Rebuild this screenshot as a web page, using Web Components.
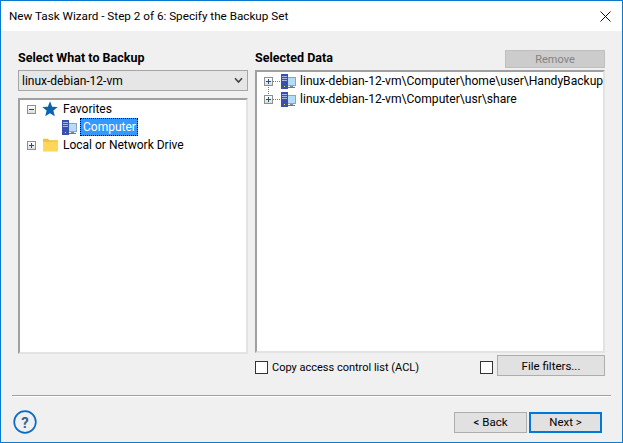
<!DOCTYPE html>
<html>
<head>
<meta charset="utf-8">
<title>New Task Wizard</title>
<style>
  html, body { margin: 0; padding: 0; width: 623px; height: 443px; overflow: hidden; }
  body { font: 12px Roboto, sans-serif; color: #000; }
</style>
</head>
<body>
<wizard-window heading="New Task Wizard - Step 2 of 6: Specify the Backup Set">
  <backup-panel slot="left" heading="Select What to Backup">
    <combo-box value="linux-debian-12-vm"></combo-box>
    <tree-box style="height:256px; margin-top:7px">
      <tree-row toggle="minus" icon="star" label="Favorites"></tree-row>
      <tree-row indent icon="computer" label="Computer" selected></tree-row>
      <tree-row toggle="plus" icon="folder" label="Local or Network Drive"></tree-row>
    </tree-box>
  </backup-panel>
  <backup-panel slot="right" heading="Selected Data" action="Remove">
    <tree-box style="height:283px; margin-top:1px">
      <tree-row wide toggle="plus" dots icon="computer" label="linux-debian-12-vm\Computer\home\user\HandyBackup"></tree-row>
      <tree-row wide toggle="plus" dots icon="computer" label="linux-debian-12-vm\Computer\usr\share"></tree-row>
    </tree-box>
    <options-row></options-row>
  </backup-panel>
</wizard-window>

<script>
const FONT = `Roboto, sans-serif`;

const ICONS = {
  star: `<svg width="16" height="16" viewBox="0 0 18 18"><path fill="#0a63ae" d="M9 .4l2.4 6 6.3.3-4.9 4.1 1.6 6.4L9 13.8 3.6 17.200l1.600-6.400L.3 6.700l6.300-.3z"/></svg>`,
  folder: `<svg width="15" height="14" viewBox="0 0 16 14"><path fill="#f0c040" d="M0 1.500C0 .7.500.2 1.200.2h4L7 2h8c.6 0 1 .4 1 1v1H0z"/><path fill="#ffd658" d="M0 3.400h16V13c0 .6-.4 1-1 1H1c-.6 0-1-.4-1-1z"/></svg>`,
  computer: `<svg width="15" height="15" viewBox="0 0 15 15"><rect x="6.500" y="3.500" width="8" height="8" fill="#b5dcf7" stroke="#8aa5bd"/><rect x="9" y="12" width="3" height="1" fill="#7c8a99"/><rect x="7" y="13" width="7" height="1" fill="#6b7785"/><rect x="0" y="0" width="7" height="15" fill="#3b4fb0"/><rect x="1" y="2" width="5" height="1" fill="#a9b4e6"/><rect x="1" y="4" width="5" height="1" fill="#a9b4e6"/><rect x="1" y="6" width="5" height="1" fill="#a9b4e6"/><rect x="3" y="12" width="1" height="1" fill="#f4e04d"/></svg>`
};

class WizardWindow extends HTMLElement {
  constructor() {
    super();
    this.attachShadow({ mode: "open" }).innerHTML = `
      <style>
        :host { display: flex; flex-direction: column; box-sizing: border-box; width: 623px; height: 443px;
          border: 1px solid #0a7ad1; background: #f0f0f0; font-family: ${FONT}; }
        .title { display: flex; align-items: center; justify-content: space-between; height: 30px; background: #fff;
          padding: 0 11px 0 8px; font-size: 11.700px; }
        .title svg { display: block; }
        .cols { display: grid; grid-template-columns: 230px 350px; column-gap: 7px; padding: 16px 0 0 17px; height: 364px; box-sizing: border-box; }
        .sep { margin: 0 11px; height: 1px; background: #a0a0a0; border-bottom: 1px solid #fff; }
        .foot { display: flex; align-items: center; justify-content: space-between; padding: 13px 20px 0 12px; }
        .nav { display: flex; gap: 2px; }
      </style>
      <div class="title"><span id="t"></span>
        <svg width="11" height="11" viewBox="0 0 11 11"><path d="M.5.5l10 10M10.500.5l-10 10" stroke="#111" fill="none"/></svg>
      </div>
      <div class="cols"><div><slot name="left"></slot></div><div><slot name="right"></slot></div></div>
      <div class="sep"></div>
      <div class="foot">
        <svg width="24" height="24" viewBox="0 0 24 24"><circle cx="12" cy="12" r="10.800" fill="none" stroke="#0a6cc4" stroke-width="1.700"/><text x="12" y="17.500" text-anchor="middle" font-family="Roboto, sans-serif" font-size="15" font-weight="700" fill="#35648f">?</text></svg>
        <div class="nav"><wiz-button style="width:73px;height:21px">&lt; Back</wiz-button><wiz-button primary style="width:73px;height:21px">Next &gt;</wiz-button></div>
      </div>`;
  }
  connectedCallback() { this.shadowRoot.getElementById("t").textContent = this.getAttribute("heading"); }
}

class BackupPanel extends HTMLElement {
  constructor() {
    super();
    this.attachShadow({ mode: "open" }).innerHTML = `
      <style>
        :host { display: block; }
        .head { display: flex; justify-content: space-between; align-items: flex-end; height: 21px; margin-bottom: 2px; }
        h2 { margin: 0; font: 700 12.500px ${FONT}; line-height: 20px; }
        #a { display: flex; }
      </style>
      <div class="head"><h2></h2><span id="a"></span></div>
      <slot></slot>`;
  }
  connectedCallback() {
    this.shadowRoot.querySelector("h2").textContent = this.getAttribute("heading");
    const action = this.getAttribute("action");
    if (action) {
      const b = document.createElement("wiz-button");
      b.setAttribute("disabled", "");
      b.style.cssText = "width:100px;height:18px;font-size:11px";
      b.textContent = action;
      this.shadowRoot.getElementById("a").append(b);
    }
  }
}

class ComboBox extends HTMLElement {
  constructor() {
    super();
    this.attachShadow({ mode: "open" }).innerHTML = `
      <style>
        :host { display: flex; align-items: center; justify-content: space-between; box-sizing: border-box; height: 21px; padding: 0 4px 0 3px;
          background: #e6e6e6; border: 1px solid #a6a6a6; font-size: 12px; }
        svg { display: block; }
      </style>
      <span></span>
      <svg width="9" height="7" viewBox="0 0 9 7"><path d="M1 1.200l3.500 3.800L8 1.200" fill="none" stroke="#444" stroke-width="1.600"/></svg>`;
  }
  connectedCallback() { this.shadowRoot.querySelector("span").textContent = this.getAttribute("value"); }
}

class TreeBox extends HTMLElement {
  constructor() {
    super();
    this.attachShadow({ mode: "open" }).innerHTML = `
      <style>
        :host { display: block; box-sizing: border-box; background: #fff; padding: 0 0 0 7px;
          border: 2px solid; border-color: #a0a0a0 #e3e3e3 #e3e3e3 #a0a0a0; }
      </style>
      <slot></slot>`;
  }
}

class TreeRow extends HTMLElement {
  constructor() {
    super();
    this.attachShadow({ mode: "open" }).innerHTML = `
      <style>
        :host { display: flex; align-items: center; height: 18px; white-space: nowrap; font-size: 12px; position: relative; }
        :host([wide]) { font-size: 12.100px; }
        :host([indent]) { padding-left: 35px; }
        .tog { flex: none; box-sizing: border-box; width: 9px; height: 9px; margin-right: 6px; position: relative; border: 1px solid #8e8f8f;
          background: linear-gradient(#fff, #dcdcdc); }
        .tog::before { content: ""; position: absolute; left: 1px; top: 3px; width: 5px; height: 1px; background: #2b4a80; }
        .tog.plus::after { content: ""; position: absolute; left: 3px; top: 1px; width: 1px; height: 5px; background: #2b4a80; }
        .icon { flex: none; display: flex; justify-content: center; width: 16px; margin-right: 3px; }
        :host([indent]) .icon { width: 15px; margin-right: 3px; }
        :host([dots]) .tog { margin-right: 0; }
        :host([dots]) .icon { width: 15px; margin: 0 2px 0 1px; }
        .dots { flex: none; width: 7px; height: 1px; background: repeating-linear-gradient(90deg, #777 0 1px, transparent 1px 2px); }
        .lab { padding: 0 2px; line-height: 18px; }
        :host([selected]) .lab { padding: 0 2px 0 3px; background: #3399ff; color: #fff; outline: 1px dotted #000; outline-offset: -1px; }
        .vline { position: absolute; left: 4px; top: -5px; width: 1px; height: 9px; background: repeating-linear-gradient(#777 0 1px, transparent 1px 2px); }
      </style>
      <span id="s"></span><span class="icon"></span><span class="lab"></span>`;
  }
  connectedCallback() {
    const r = this.shadowRoot;
    const toggle = this.getAttribute("toggle");
    const s = r.getElementById("s");
    s.style.display = "contents";
    if (toggle) {
      const hasDots = this.hasAttribute("dots");
      const linked = hasDots && this.previousElementSibling;
      s.innerHTML = (linked ? `<span class="vline"></span>` : "") + `<span class="tog ${toggle}"></span>` + (hasDots ? `<span class="dots"></span>` : "");
    }
    r.querySelector(".icon").innerHTML = ICONS[this.getAttribute("icon")] || "";
    r.querySelector(".lab").textContent = this.getAttribute("label");
  }
}

class WizButton extends HTMLElement {
  constructor() {
    super();
    this.attachShadow({ mode: "open" }).innerHTML = `
      <style>
        :host { display: inline-flex; align-items: center; justify-content: center; box-sizing: border-box; font-size: 11.500px;
          background: #e1e1e1; border: 1px solid #adadad; }
        :host([primary]) { border: 2px solid #0078d7; background: #e1e1e1; }
        :host([disabled]) { background: #cccccc; border-color: #bfbfbf; color: #838383; }
      </style>
      <slot></slot>`;
  }
}

class WizCheck extends HTMLElement {
  constructor() {
    super();
    this.attachShadow({ mode: "open" }).innerHTML = `
      <style>
        :host { display: inline-flex; align-items: center; gap: 4px; font-size: 11px; margin-top: 3px; }
        i { display: block; box-sizing: border-box; width: 13px; height: 13px; background: #fff; border: 1px solid #333; }
      </style>
      <i></i><slot></slot>`;
  }
}

class OptionsRow extends HTMLElement {
  constructor() {
    super();
    this.attachShadow({ mode: "open" }).innerHTML = `
      <style>
        :host { display: flex; align-items: center; justify-content: space-between; height: 21px; margin-top: 2px; }
        div { display: flex; align-items: center; gap: 4px; }
      </style>
      <wiz-check>Copy access control list (ACL)</wiz-check>
      <div><wiz-check></wiz-check><wiz-button style="width:108px;height:21px">File filters...</wiz-button></div>`;
  }
}

customElements.define("wizard-window", WizardWindow);
customElements.define("backup-panel", BackupPanel);
customElements.define("combo-box", ComboBox);
customElements.define("tree-box", TreeBox);
customElements.define("tree-row", TreeRow);
customElements.define("wiz-button", WizButton);
customElements.define("wiz-check", WizCheck);
customElements.define("options-row", OptionsRow);
</script>
</body>
</html>
